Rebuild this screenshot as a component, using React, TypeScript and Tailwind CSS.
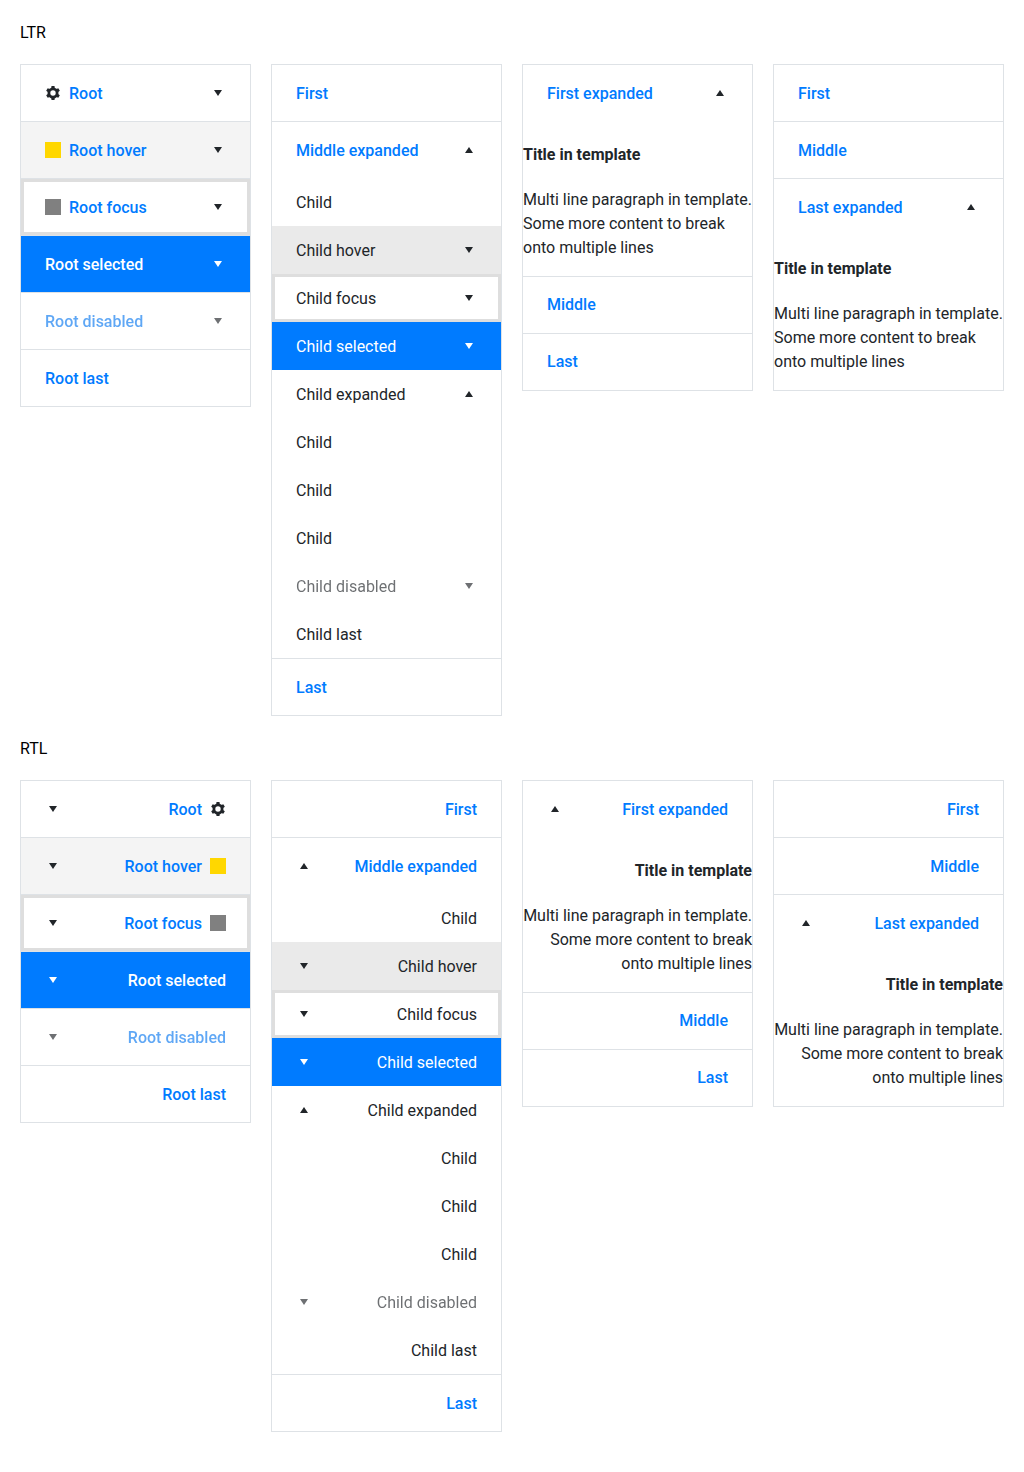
import type { ReactNode } from "react";

type State = "normal" | "hover" | "focus" | "selected" | "disabled";
type Item = {
  label: string;
  state?: State;
  arrow?: "up" | "down";
  icon?: "gear" | "yellow" | "gray";
  children?: Item[];
  template?: boolean;
};

const panels: Item[][] = [
  [
    { label: "Root", arrow: "down", icon: "gear" },
    { label: "Root hover", arrow: "down", icon: "yellow", state: "hover" },
    { label: "Root focus", arrow: "down", icon: "gray", state: "focus" },
    { label: "Root selected", arrow: "down", state: "selected" },
    { label: "Root disabled", arrow: "down", state: "disabled" },
    { label: "Root last" },
  ],
  [
    { label: "First" },
    {
      label: "Middle expanded",
      arrow: "up",
      children: [
        { label: "Child" },
        { label: "Child hover", arrow: "down", state: "hover" },
        { label: "Child focus", arrow: "down", state: "focus" },
        { label: "Child selected", arrow: "down", state: "selected" },
        { label: "Child expanded", arrow: "up" },
        { label: "Child" },
        { label: "Child" },
        { label: "Child" },
        { label: "Child disabled", arrow: "down", state: "disabled" },
        { label: "Child last" },
      ],
    },
    { label: "Last" },
  ],
  [
    { label: "First expanded", arrow: "up", template: true },
    { label: "Middle" },
    { label: "Last" },
  ],
  [
    { label: "First" },
    { label: "Middle" },
    { label: "Last expanded", arrow: "up", template: true },
  ],
];

const rootStates: Record<State, string> = {
  normal: "text-[#007bff]",
  hover: "bg-[#f4f4f4] text-[#007bff]",
  focus: "text-[#007bff] shadow-[inset_0_0_0_3px_rgba(0,0,0,0.13)]",
  selected: "bg-[#007bff] text-white",
  disabled: "text-[#007bff] opacity-65 grayscale-10",
};

const childStates: Record<State, string> = {
  normal: "",
  hover: "bg-[#eaeaea]",
  focus: "shadow-[inset_0_0_0_3px_rgba(0,0,0,0.13)]",
  selected: "bg-[#007bff] text-white",
  disabled: "opacity-65 grayscale-10",
};

function Arrow({ dir, light }: { dir: "up" | "down"; light: boolean }) {
  return (
    <svg viewBox="0 0 16 16" className={`ms-auto size-4 shrink-0 ${light ? "fill-white" : "fill-[#212529]"}`}>
      <path d={dir === "down" ? "M8 11 4 5h8z" : "M8 5l4 6H4z"} />
    </svg>
  );
}

function ItemIcon({ kind }: { kind: "gear" | "yellow" | "gray" }) {
  if (kind === "yellow") return <span className="me-2 size-4 bg-[#ffd700]" />;
  if (kind === "gray") return <span className="me-2 size-4 bg-[#808080]" />;
  return (
    <svg viewBox="0 0 16 16" className="me-2 size-4 fill-[#212529]">
      <circle cx="8" cy="8" r="4.1" fill="none" stroke="#212529" strokeWidth="2.8" />
      {[0, 60, 120, 180, 240, 300].map((angle) => (
        <path key={angle} d="M6.5 1h3l.4 2.9H6.1z" transform={`rotate(${angle} 8 8)`} />
      ))}
    </svg>
  );
}

function Row({ item, className }: { item: Item; className: string }) {
  return (
    <div className={`flex items-center px-6 ${className}`}>
      {item.icon && <ItemIcon kind={item.icon} />}
      <span className="pt-[1.1px]">{item.label}</span>
      {item.arrow && <Arrow dir={item.arrow} light={item.state === "selected"} />}
    </div>
  );
}

function Template({ rtl }: { rtl: boolean }) {
  return (
    <div dir="ltr" className={`pt-[21.83px] pb-4 ${rtl ? "text-right" : "text-left"}`}>
      <h4 className="mb-[20.73px] font-bold">Title in template</h4>
      <p>Multi line paragraph in template. Some more content to break onto multiple lines</p>
    </div>
  );
}

function PanelBar({ items, rtl }: { items: Item[]; rtl: boolean }) {
  return (
    <ul className="divide-y divide-[#dee2e6] border border-[#dee2e6] bg-white text-[#212529]">
      {items.map((item) => (
        <li key={item.label}>
          <Row item={item} className={`h-14 font-medium ${rootStates[item.state ?? "normal"]}`} />
          {item.children?.map((child, i) => (
            <Row key={i} item={child} className={`h-12 ${childStates[child.state ?? "normal"]}`} />
          ))}
          {item.template && <Template rtl={rtl} />}
        </li>
      ))}
    </ul>
  );
}

function Section({ title, rtl = false }: { title: ReactNode; rtl?: boolean }) {
  return (
    <section className="flex flex-col gap-5">
      <div className="h-6 pt-px">{title}</div>
      <div className="grid grid-cols-4 items-start gap-5">
        {panels.map((items, i) => (
          <div key={i} dir={rtl ? "rtl" : "ltr"}>
            <PanelBar items={items} rtl={rtl} />
          </div>
        ))}
      </div>
    </section>
  );
}

export default function App() {
  return (
    <main className="flex min-h-[1472px] w-[1024px] flex-col gap-5 bg-white p-5 font-['Roboto',sans-serif] text-base leading-6 text-black">
      <Section title="LTR" />
      <Section title="RTL" rtl />
    </main>
  );
}
